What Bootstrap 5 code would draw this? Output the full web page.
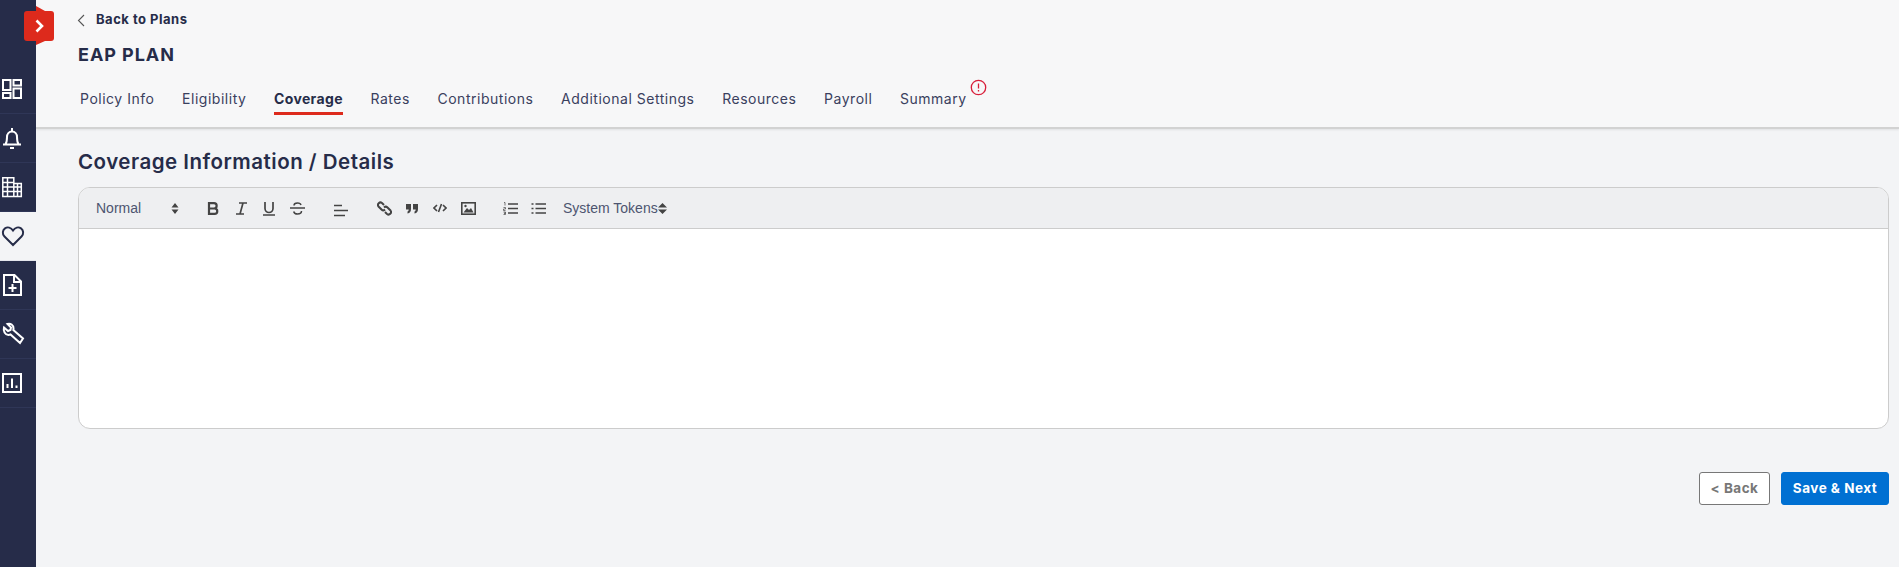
<!DOCTYPE html>
<html lang="en"><head><meta charset="utf-8"><title>EAP Plan</title>
<link href="https://cdn.jsdelivr.net/npm/bootstrap@5.3.0/dist/css/bootstrap.min.css" rel="stylesheet">
<style>
html,body{height:567px;overflow:hidden}
body{background:#f3f4f6;font-family:Inter,"Liberation Sans",sans-serif;color:#262c49}
.side-rail{width:36px;background:#262c49;height:567px;flex:none;padding-top:65px;position:relative}
.rail-item{height:49px;display:flex;align-items:center;justify-content:flex-start;padding-left:1px;border-bottom:1px solid #2f3657;color:#fff}
.rail-item.on{background:#f3f4f6;color:#262c49;border-bottom-color:#e4e6ec}
.toggle-tab{position:absolute;left:24px;top:11px;width:30px;height:30px;background:#dd2a1c;border-radius:3px;display:flex;align-items:center;justify-content:center;z-index:2}
.toggle-tab::before,.toggle-tab::after{content:"";position:absolute;left:12px;width:0;height:0;border-left:0 solid transparent}
.toggle-tab::before{top:-5px;border-bottom:5px solid #dd2a1c;border-right:9px solid transparent}
.toggle-tab::after{bottom:-4px;border-top:4px solid #dd2a1c;border-right:9px solid transparent}
.head-pane{background:#f7f7f8;height:129px;border-bottom:2px solid #d2d2d2;padding-left:42px;box-shadow:0 1px 2px rgba(0,0,0,.08)}
.back-row{height:39px;font-size:13px;font-weight:700;letter-spacing:.5px;padding-top:1px}
.back-row span{margin-left:10px}
.back-row svg{margin-left:-2px}
.plan-name{font-size:18px;font-weight:700;margin:0;line-height:22px;padding-top:5px;height:27px;letter-spacing:.95px}
.tabs-row{gap:27.6px;padding-left:2px;margin-top:14px}
.tab-link{font-size:14px;color:#3a405e;text-decoration:none;height:35px;display:block;line-height:21px;padding-top:8px;position:relative;white-space:nowrap;letter-spacing:.52px}
.tab-link.on{font-weight:700;color:#262c49;border-bottom:3px solid #dd2a1c;letter-spacing:.35px}
.warn-dot{position:absolute;left:100%;top:-1px;margin-left:3px}
.body-pane{padding:0 10px 0 42px}
.sect-title{font-size:20.5px;font-weight:600;margin:0;height:58px;line-height:24px;padding-top:21px;letter-spacing:.5px}
.editor-box{border:1px solid #ccc;border-radius:12px;height:242px;background:#fff;overflow:hidden}
.editor-bar{height:41px;background:#eeeff1;border-bottom:1px solid #ccc;font-family:"Liberation Sans",sans-serif;font-size:14px;color:#444;padding-left:17px}
.bar-gap{display:flex;align-items:center;justify-content:center;width:28px;height:100%;flex:none}
.bar-label{color:#4d5570}
.lbl-normal{width:75px}
.gap-marks{margin-right:20px}
.gap-align{margin-left:16px;padding-top:4px}
.gap-link{margin-left:15px}
.gap-list{margin-left:14px}
.gap-tokens{margin-left:11px}
.foot-row{margin-top:43px;gap:11px}
.btn-prev,.btn-save{font-size:13.5px;font-weight:700;letter-spacing:.5px;height:33px;border-radius:3px;display:flex;align-items:center;justify-content:center;padding:0}
.btn-prev{width:71px;background:#fff;border:1px solid #777;color:#777}
.btn-save{width:108px;background:#0070d2;border:1px solid #0070d2;color:#fff}
</style></head><body>
<div class="d-flex">
<nav class="side-rail">
<div class="toggle-tab"><svg width="14" height="14" viewBox="0 0 14 14" fill="none" stroke="#fff" stroke-width="2.6"><path d="M4.500 1.500 10 7l-5.500 5.500"/></svg></div>
<div class="rail-item"><svg width="22" height="22" viewBox="0 0 22 22" fill="none" stroke="#fff" stroke-width="2"><rect x="2" y="2" width="7.500" height="10"/><rect x="12.500" y="2" width="7.500" height="5.500"/><rect x="2" y="15" width="7.500" height="5"/><rect x="12.500" y="10.500" width="7.500" height="9.500"/></svg></div>
<div class="rail-item"><svg width="22" height="24" viewBox="0 0 22 24" fill="none" stroke="#fff" stroke-width="2"><path d="M2 18.500h18M4.500 18c1.500-2 1.500-4 1.500-7 0-3 2-5.500 5-5.500s5 2.500 5 5.500c0 3 0 5 1.500 7M11 2v3.500M9 22h4"/></svg></div>
<div class="rail-item"><svg width="22" height="22" viewBox="0 0 22 22" fill="none" stroke="#fff" stroke-width="1.500"><path d="M1.800 20.500V1.800h11V7.500h7.500v13zM12.800 7.500v13M1.800 6.500h11M1.800 11h18.500M1.800 15.500h18.500M6.500 1.800v18.700M16.500 7.500v13" /></svg></div>
<div class="rail-item on"><svg width="24" height="22" viewBox="0 0 24 22" fill="none" stroke="#262c49" stroke-width="2"><path d="M12 20 3.500 11.500C1 9 1.500 5 4 3.300 6.500 1.800 10 2.500 12 5.500c2-3 5.500-3.700 8-2.200 2.500 1.700 3 5.700.5 8.200z"/></svg></div>
<div class="rail-item"><svg width="22" height="24" viewBox="0 0 22 24" fill="none" stroke="#fff" stroke-width="2"><path d="M3 2h10.500L20 8.500V22H3zM13 2v7h7M11.500 11v8M7.500 15h8"/></svg></div>
<div class="rail-item"><svg width="24" height="24" viewBox="0 0 24 24" fill="none" stroke="#fff" stroke-width="2"><path d="M3 5.500 7 9l2.500-1 .5-2.500L6.500 2c3-1 6 1 6 4.500 0 .7 0 1-.2 1.500L22 16.500 19 21l-9.500-8.500c-.7.3-1.300.4-2 .4C4 13 2 9 3 5.500z"/></svg></div>
<div class="rail-item"><svg width="22" height="22" viewBox="0 0 22 22" fill="none" stroke="#fff" stroke-width="2"><rect x="2" y="2" width="18" height="18"/><path d="M6.500 16v-4M11 16V6.500M15.500 16v-2.500"/></svg></div>
</nav>
<main class="flex-grow-1" style="min-width:0">
<header class="head-pane">
<div class="back-row d-flex align-items-center"><svg width="10" height="13" viewBox="0 0 10 13" fill="none" stroke="#555" stroke-width="1.100"><path d="M8 1 2.500 6.500 8 12"/></svg><span>Back to Plans</span></div>
<h1 class="plan-name">EAP PLAN</h1>
<div class="tabs-row d-flex">
<a class="tab-link">Policy Info</a><a class="tab-link">Eligibility</a><a class="tab-link on">Coverage</a><a class="tab-link">Rates</a><a class="tab-link">Contributions</a><a class="tab-link">Additional Settings</a><a class="tab-link">Resources</a><a class="tab-link">Payroll</a>
<a class="tab-link">Summary<svg class="warn-dot" width="17" height="17" viewBox="0 0 17 17" fill="none" stroke="#d81e3a" stroke-width="1.300"><circle cx="8.500" cy="8.500" r="7.200"/><path d="M8.500 4.500v5M8.500 11v1.500"/></svg></a>
</div>
</header>
<section class="body-pane">
<h2 class="sect-title">Coverage Information / Details</h2>
<div class="editor-box">
<div class="editor-bar d-flex align-items-center">
<span class="bar-label lbl-normal">Normal</span>
<svg width="8" height="11" viewBox="0 0 8 11" fill="#444" class="gap-marks"><path d="M4 0 7.500 4.500H.5zM4 11 .5 6.500h7z"/></svg>
<span class="bar-gap"><svg width="12" height="13" viewBox="0 0 12 13" fill="none" stroke="#444" stroke-width="2.200"><path d="M2 1.200h5a2.600 2.600 0 0 1 0 5.300H2h5.600a2.600 2.600 0 0 1 0 5.300H2zM2 1v11"/></svg></span>
<span class="bar-gap"><svg width="11" height="13" viewBox="0 0 11 13" fill="none" stroke="#444" stroke-width="1.700"><path d="M3 1h8M0 12h8M7 1 4 12"/></svg></span>
<span class="bar-gap"><svg width="12" height="15" viewBox="0 0 12 15" fill="none" stroke="#444" stroke-width="1.700"><path d="M2 1v6.500a4 4 0 0 0 8 0V1M0 14h12"/></svg></span>
<span class="bar-gap"><svg width="15" height="13" viewBox="0 0 15 13" fill="none" stroke="#444" stroke-width="1.500"><path d="M0 6h15M11 3C10.700 1.800 9.500 1 7.500 1 5.500 1 4 2 4 3.500M11.500 9c0 2-1.800 3-4 3-2 0-3.500-1-3.800-2.500"/></svg></span>
<span class="bar-gap gap-align"><svg width="14" height="13" viewBox="0 0 14 13" fill="none" stroke="#444" stroke-width="1.700"><path d="M0 1.500h8M0 6.500h14M0 11.500h11"/></svg></span>
<span class="bar-gap gap-link"><svg width="15" height="15" viewBox="0 0 15 15" fill="none" stroke="#444" stroke-width="2"><path d="M7 4 5 2a2.500 2.500 0 0 0-3.500 3.500l3 3a2.500 2.500 0 0 0 3.500 0M8 11l2 2a2.500 2.500 0 0 0 3.500-3.500l-3-3a2.500 2.500 0 0 0-3.500 0"/></svg></span>
<span class="bar-gap"><svg width="12" height="11" viewBox="0 0 12 11" fill="#444"><path d="M0 1h5v5c0 2.500-1 4-3.500 4.500V8.500c.8-.2 1.200-.8 1.200-2H0zM7 1h5v5c0 2.500-1 4-3.500 4.500V8.500c.8-.2 1.200-.8 1.200-2H7z"/></svg></span>
<span class="bar-gap"><svg width="14" height="10" viewBox="0 0 14 10" fill="none" stroke="#444" stroke-width="1.600"><path d="M4 2 1 5l3 3M10 2l3 3-3 3M8.500 1l-3 8"/></svg></span>
<span class="bar-gap"><svg width="15" height="13" viewBox="0 0 15 13" fill="none" stroke="#444" stroke-width="1.600"><rect x=".8" y=".8" width="13.400" height="11.400"/><path d="M2.500 10.500 6 6l2 2 2-2 2.500 4.500z" fill="#444" stroke="none"/><circle cx="4.500" cy="4" r="1.200" fill="#444" stroke="none"/></svg></span>
<span class="bar-gap gap-list"><svg width="15" height="13" viewBox="0 0 15 13" fill="none" stroke="#444"><path d="M1 .5h1v3M.5 5.500h2v1.500H.5v1.500h2M.5 10h2v1.200H1h1.500v1.300h-2" stroke-width=".7"/><path d="M5 2h10M5 6.500h10M5 11h10" stroke-width="1.600"/></svg></span>
<span class="bar-gap"><svg width="15" height="13" viewBox="0 0 15 13" fill="none" stroke="#444" stroke-width="1.600"><path d="M4.500 2H15M4.500 6.500H15M4.500 11H15M.5 2h2M.5 6.500h2M.5 11h2"/></svg></span>
<span class="bar-label gap-tokens">System Tokens</span><svg width="9" height="11" viewBox="0 0 9 11" fill="#444"><path d="M4.500 0 9 4.500H0zM4.500 11 0 6.500h9z"/></svg>
</div>
</div>
<div class="foot-row d-flex justify-content-end">
<button class="btn-prev" type="button">&lt; Back</button>
<button class="btn-save" type="button">Save &amp; Next</button>
</div>
</section>
</main>
</div>
</body></html>
